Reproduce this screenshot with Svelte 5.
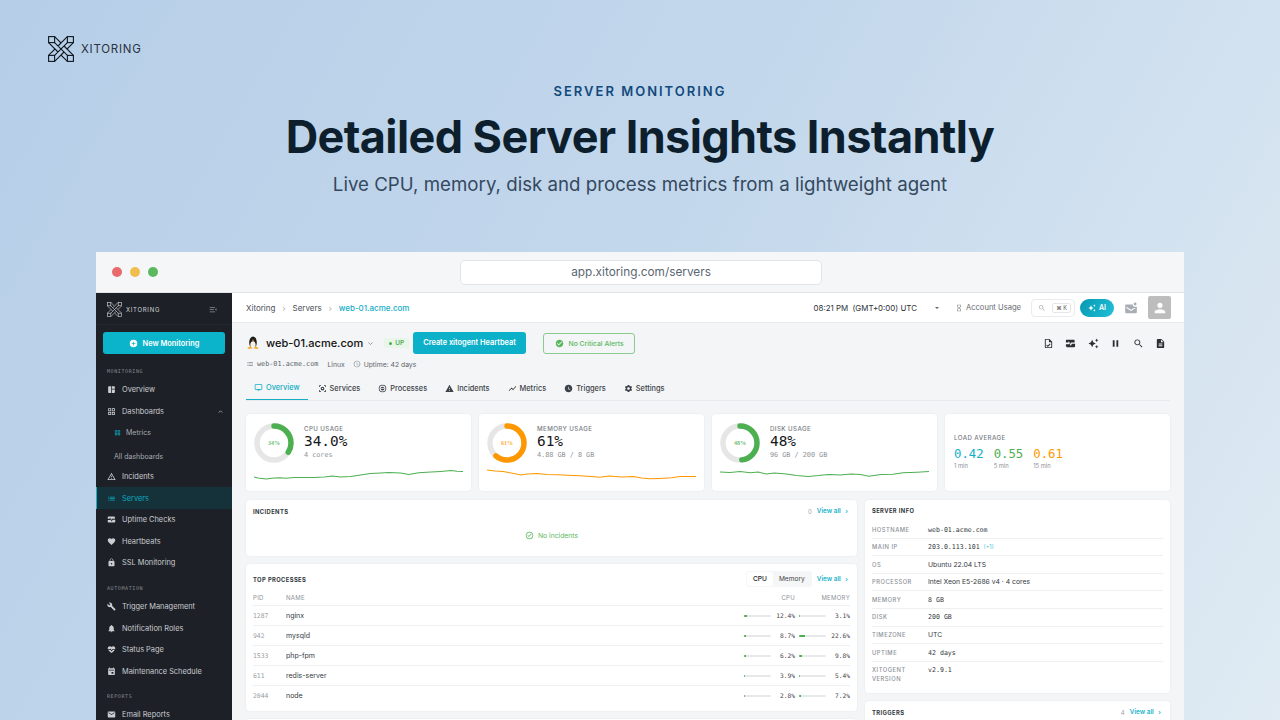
<script>
	const ic = {
		dash: 'M11 21H5c-1.1 0-2-.9-2-2V5c0-1.1.9-2 2-2h6v18zm2 0h6c1.1 0 2-.9 2-2v-7h-8v9zm8-11V5c0-1.1-.9-2-2-2h-6v7h8z',
		grid: 'M3 3h8v8H3V3zm2 2v4h4V5H5zm8-2h8v8h-8V3zm2 2v4h4V5h-4zM3 13h8v8H3v-8zm2 2v4h4v-4H5zm8-2h8v8h-8v-8zm2 2v4h4v-4h-4z',
		warn: 'M12 5.99L19.53 19H4.47L12 5.99M12 2L1 21h22L12 2zm1 14h-2v2h2v-2zm0-6h-2v4h2v-4z',
		warnf: 'M1 21h22L12 2 1 21zm12-3h-2v-2h2v2zm0-4h-2v-4h2v4z',
		list: 'M3 13h2v-2H3v2zm0 4h2v-2H3v2zm0-8h2V7H3v2zm4 4h14v-2H7v2zm0 4h14v-2H7v2zM7 7v2h14V7H7z',
		pulse: 'M20 4H4c-1.1 0-2 .9-2 2v4h5l1.5-3 3 6 1.5-3h8V6c0-1.1-.9-2-2-2zM15 12.5l-2.5 5-3-6-1 1.9H2V18c0 1.1.9 2 2 2h16c1.1 0 2-.9 2-2v-5.5h-7z',
		heart: 'M12 21.35l-1.45-1.32C5.4 15.36 2 12.28 2 8.5 2 5.42 4.42 3 7.5 3c1.74 0 3.41.81 4.5 2.09C13.09 3.81 14.76 3 16.5 3 19.58 3 22 5.42 22 8.5c0 3.78-3.4 6.86-8.55 11.54L12 21.35z',
		lock: 'M18 8h-1V6c0-2.76-2.24-5-5-5S7 3.24 7 6v2H6c-1.1 0-2 .9-2 2v10c0 1.1.9 2 2 2h12c1.1 0 2-.9 2-2V10c0-1.1-.9-2-2-2zm-6 9c-1.1 0-2-.9-2-2s.9-2 2-2 2 .9 2 2-.9 2-2 2zm3.1-9H8.9V6c0-1.71 1.39-3.1 3.1-3.1 1.71 0 3.1 1.39 3.1 3.1v2z',
		build: 'M22.7 19l-9.1-9.1c.9-2.3.4-5-1.5-6.9-2-2-5-2.4-7.4-1.3L9 6 6 9 1.6 4.7C.4 7.1.9 10.1 2.9 12.1c1.9 1.9 4.6 2.4 6.9 1.5l9.1 9.1c.4.4 1 .4 1.4 0l2.3-2.3c.5-.4.5-1.1.1-1.4z',
		bell: 'M12 22c1.1 0 2-.9 2-2h-4c0 1.1.89 2 2 2zm6-6v-5c0-3.07-1.64-5.64-4.5-6.32V4c0-.83-.67-1.5-1.5-1.5s-1.5.67-1.5 1.5v.68C7.63 5.36 6 7.92 6 11v5l-2 2v1h16v-1l-2-2z',
		hpulse: 'M16.5 3c-1.74 0-3.41.81-4.5 2.09C10.91 3.81 9.24 3 7.5 3 4.42 3 2 5.42 2 8.5c0 .85.17 1.64.48 2.5H8l1.2-2 3 5 1.6-3H21.5c.33-.86.5-1.65.5-2.5C22 5.42 19.58 3 16.5 3zM14.9 13l-2.6 4.6-3.1-5.1-.1.5H3.6c1.6 2.3 4.4 4.8 8.4 8.35 3.9-3.55 6.8-6.05 8.4-8.35h-5.5z',
		event: 'M19 3h-1V1h-2v2H8V1H6v2H5c-1.1 0-2 .9-2 2v14c0 1.1.9 2 2 2h14c1.1 0 2-.9 2-2V5c0-1.1-.9-2-2-2zm-2 15h-5v-5h5v5zm2-9H5V7h14v2z',
		mail: 'M20 4H4c-1.1 0-1.99.9-1.99 2L2 18c0 1.1.9 2 2 2h16c1.1 0 2-.9 2-2V6c0-1.1-.9-2-2-2zm0 4l-8 5-8-5V6l8 5 8-5v2z',
		search: 'M15.5 14h-.79l-.28-.27C15.41 12.59 16 11.11 16 9.5 16 5.91 13.09 3 9.5 3S3 5.91 3 9.5 5.91 16 9.5 16c1.61 0 3.09-.59 4.23-1.57l.27.28v.79l5 4.99L20.49 19l-4.99-5zm-6 0C7.01 14 5 11.99 5 9.5S7.01 5 9.5 5 14 7.01 14 9.5 11.99 14 9.5 14z',
		pause: 'M6 19h4V5H6v14zm8-14v14h4V5h-4z',
		doc: 'M14 2H6c-1.1 0-1.99.9-1.99 2L4 20c0 1.1.89 2 1.99 2H18c1.1 0 2-.9 2-2V8l-6-6zm2 16H8v-2h8v2zm0-4H8v-2h8v2zm-3-5V3.5L18.5 9H13z',
		doccheck: 'M14 2H6c-1.1 0-2 .9-2 2v16c0 1.1.9 2 2 2h12c1.1 0 2-.9 2-2V8l-6-6zm4 18H6V4h7v5h5v11zm-9.5-5.5L7 16l3.5 3.5 6-6L15 12l-4.5 4.5-2-2z',
		gear: 'M19.14 12.94c.04-.3.06-.61.06-.94 0-.32-.02-.64-.07-.94l2.03-1.58c.18-.14.23-.41.12-.61l-1.92-3.32c-.12-.22-.37-.29-.59-.22l-2.39.96c-.5-.38-1.03-.7-1.62-.94l-.36-2.54c-.04-.24-.24-.41-.48-.41h-3.84c-.24 0-.43.17-.47.41l-.36 2.54c-.59.24-1.13.57-1.62.94l-2.39-.96c-.22-.08-.47 0-.59.22L2.74 8.87c-.12.21-.08.47.12.61l2.03 1.58c-.05.3-.09.63-.09.94s.02.64.07.94l-2.03 1.58c-.18.14-.23.41-.12.61l1.92 3.32c.12.22.37.29.59.22l2.39-.96c.5.38 1.03.7 1.62.94l.36 2.54c.05.24.24.41.48.41h3.84c.24 0 .44-.17.47-.41l.36-2.54c.59-.24 1.13-.56 1.62-.94l2.39.96c.22.08.47 0 .59-.22l1.92-3.32c.12-.22.07-.47-.12-.61l-2.01-1.58zM12 15.6c-1.98 0-3.6-1.62-3.6-3.6s1.62-3.6 3.6-3.6 3.6 1.62 3.6 3.6-1.62 3.6-3.6 3.6z',
		person: 'M12 12c2.21 0 4-1.79 4-4s-1.79-4-4-4-4 1.79-4 4 1.79 4 4 4zm0 2c-2.67 0-8 1.34-8 4v2h16v-2c0-2.66-5.33-4-8-4z',
		spark: 'M19 9l1.25-2.75L23 5l-2.75-1.25L19 1l-1.25 2.75L15 5l2.75 1.25L19 9zm-7.5.5L9 4 6.5 9.5 1 12l5.5 2.5L9 20l2.5-5.5L17 12l-5.5-2.5zM19 15l-1.25 2.75L15 19l2.75 1.25L19 23l1.25-2.75L23 19l-2.75-1.25L19 15z',
		check: 'M12 2C6.48 2 2 6.48 2 12s4.48 10 10 10 10-4.48 10-10S17.52 2 12 2zm-2 15l-5-5 1.41-1.41L10 14.17l7.59-7.59L19 8l-9 9z',
		checko: 'M12 2C6.48 2 2 6.48 2 12s4.48 10 10 10 10-4.48 10-10S17.52 2 12 2zm0 18c-4.41 0-8-3.59-8-8s3.59-8 8-8 8 3.59 8 8-3.59 8-8 8zm-1.8-4.2L6.6 12.2 8 10.8l2.2 2.2 5.8-5.8 1.4 1.4-7.2 7.2z',
		clock: 'M12 2C6.5 2 2 6.5 2 12s4.5 10 10 10 10-4.5 10-10S17.5 2 12 2zm0 18c-4.41 0-8-3.59-8-8s3.59-8 8-8 8 3.59 8 8-3.59 8-8 8zm.5-13H11v6l5.2 3.2.8-1.3-4.5-2.7V7z',
		clockf: 'M12 2C6.5 2 2 6.5 2 12s4.5 10 10 10 10-4.5 10-10S17.5 2 12 2zm4.2 14.2L11 13V7h1.5v5.2l4.5 2.7-.8 1.3z',
		monitor: 'M20 3H4c-1.1 0-2 .9-2 2v11c0 1.1.9 2 2 2h5v2h6v-2h5c1.1 0 2-.9 2-2V5c0-1.1-.9-2-2-2zm0 13H4V5h16v11z',
		services: 'M3 3h5v2H5v3H3V3zm13 0h5v5h-2V5h-3V3zM3 16h2v3h3v2H3v-5zm16 0h2v5h-5v-2h3v-3zM12 7a5 5 0 100 10 5 5 0 000-10zm0 3a2 2 0 110 4 2 2 0 010-4z',
		proc: 'M12 2a10 10 0 100 20 10 10 0 000-20zm0 18a8 8 0 110-16 8 8 0 010 16zm0-13a5 5 0 100 10 5 5 0 000-10zM8 11h8v2H8v-2z',
		trend: 'M3.5 18.5l6-6 4 4L22 6.9l-1.4-1.4-7.1 8-4-4L2 17z',
		menu: 'M2 5h14v2H2V5zm0 6h11v2H2v-2zm0 6h14v2H2v-2zm17.5-8.5L16 12l3.5 3.5 1.4-1.4-2.1-2.1 2.1-2.1-1.4-1.4z',
		plus: 'M12 2a10 10 0 100 20 10 10 0 000-20zm5 11h-4v4h-2v-4H7v-2h4V7h2v4h4v2z',
		glass: 'M6 2v6l4 4-4 4v6h12v-6l-4-4 4-4V2H6zm10 14.5V20H8v-3.5l4-4 4 4zM12 11.5l-4-4V4h8v3.5l-4 4z',
		mailDot: 'M19 2.5a2.5 2.5 0 110 5 2.5 2.5 0 010-5zM15 6H3.8C2.8 6 2 6.8 2 7.8v11.4C2 20.2 2.8 21 3.8 21h16.4c1 0 1.8-.8 1.8-1.8V10h-3.5c-2.2 0-3.5-2-3.5-4zM20 12l-8 5-8-5V9.8l8 5 5-3 3 .2z'
	};

	const nav = [
		{ k: 'label', t: 'MONITORING' },
		{ i: 'dash', t: 'Overview' },
		{ i: 'grid', t: 'Dashboards', caret: true },
		{ i: 'grid', t: 'Metrics', sub: true },
		{ t: 'All dashboards', plain: true },
		{ i: 'warn', t: 'Incidents' },
		{ i: 'list', t: 'Servers', active: true },
		{ i: 'pulse', t: 'Uptime Checks' },
		{ i: 'heart', t: 'Heartbeats' },
		{ i: 'lock', t: 'SSL Monitoring' },
		{ k: 'label', t: 'AUTOMATION' },
		{ i: 'build', t: 'Trigger Management' },
		{ i: 'bell', t: 'Notification Roles' },
		{ i: 'hpulse', t: 'Status Page' },
		{ i: 'event', t: 'Maintenance Schedule' },
		{ k: 'label', t: 'REPORTS' },
		{ i: 'mail', t: 'Email Reports' }
	];

	const tabs = [
		{ i: 'monitor', t: 'Overview', on: true },
		{ i: 'services', t: 'Services' },
		{ i: 'proc', t: 'Processes' },
		{ i: 'warnf', t: 'Incidents' },
		{ i: 'trend', t: 'Metrics' },
		{ i: 'clockf', t: 'Triggers' },
		{ i: 'gear', t: 'Settings' }
	];

	const stats = [
		{
			label: 'CPU USAGE', value: '34.0%', note: '4 cores', pct: 34, color: '#4caf50',
			pts: '0,13 4,14 8,14.5 12,15 16,14.5 20,14 26,13.8 32,14.2 40,13.6 50,13.4 60,13.6 70,13 78,12 86,13 96,12.6 106,11 116,9.5 126,9 134,8.6 146,9 154,10.5 164,8.8 176,8 186,7.4 196,6.6 202,7.2 208,7.6'
		},
		{
			label: 'MEMORY USAGE', value: '61%', note: '4.88 GB / 8 GB', pct: 61, color: '#ff9800',
			pts: '0,6 8,7 16,7.6 24,9 34,11 40,10 50,9.4 60,10.4 70,10.8 80,11.2 92,11.8 104,12.4 112,13.2 122,12 134,13 146,12.4 154,14 162,14.8 172,14.4 184,13.8 192,12.4 204,12.6 208,12.4'
		},
		{
			label: 'DISK USAGE', value: '48%', note: '96 GB / 200 GB', pct: 48, color: '#4caf50',
			pts: '0,8 10,8.4 20,7.6 30,8.8 38,8 46,10 54,9 66,10 76,11.4 88,12.4 98,11.6 108,10.4 120,11 130,10 140,10.6 148,12.2 160,10.6 172,10.2 182,8.8 196,8.2 208,7.6'
		}
	];

	const procs = [
		{ pid: 1287, name: 'nginx', cpu: 12.4, mem: 3.1 },
		{ pid: 942, name: 'mysqld', cpu: 8.7, mem: 22.6 },
		{ pid: 1533, name: 'php-fpm', cpu: 6.2, mem: 9.8 },
		{ pid: 611, name: 'redis-server', cpu: 3.9, mem: 5.4 },
		{ pid: 2044, name: 'node', cpu: 2.8, mem: 7.2 }
	];

	const info = [
		{ k: 'HOSTNAME', v: 'web-01.acme.com', mono: true },
		{ k: 'MAIN IP', v: '203.0.113.101', mono: true, extra: '(+1)' },
		{ k: 'OS', v: 'Ubuntu 22.04 LTS' },
		{ k: 'PROCESSOR', v: 'Intel Xeon E5-2686 v4 · 4 cores' },
		{ k: 'MEMORY', v: '8 GB', mono: true },
		{ k: 'DISK', v: '200 GB', mono: true },
		{ k: 'TIMEZONE', v: 'UTC' },
		{ k: 'UPTIME', v: '42 days', mono: true },
		{ k: 'XITOGENT VERSION', v: 'v2.9.1', mono: true }
	];

	const circ = 2 * Math.PI * 17;
</script>

{#snippet icon(name, cls)}
	<svg class={cls} viewBox="0 0 24 24" fill="currentColor"><path d={ic[name]} /></svg>
{/snippet}

{#snippet logo(cls)}
	<svg class={cls} viewBox="0 0 26 26" fill="none" stroke="currentColor" stroke-width="1.1">
		<rect x="0.6" y="0.6" width="6" height="6" />
		<rect x="19.4" y="0.6" width="6" height="6" />
		<rect x="0.6" y="19.4" width="6" height="6" />
		<rect x="19.4" y="19.4" width="6" height="6" />
		<path d="M6.6 0.6L13 7l6.4-6.4M6.6 6.6L19.4 19.4M19.4 6.6L6.6 19.4M6.6 25.4L13 19l6.4 6.4M0.6 6.6L7 13l-6.4 6.4M25.4 6.6L19 13l6.4 6.4M10 10l3-3M16 16l-3 3M10 16l-3-3M16 10l3 3" />
	</svg>
{/snippet}

<div class="page">
	<header class="brand">
		<span class="brand-mark">{@render logo('logo-lg')}</span>
		<span class="brand-name">XITORING</span>
	</header>

	<section class="hero">
		<div class="eyebrow">SERVER MONITORING</div>
		<h1>Detailed Server Insights Instantly</h1>
		<p>Live CPU, memory, disk and process metrics from a lightweight agent</p>
	</section>

	<div class="window">
		<div class="chrome">
			<span class="dot red"></span>
			<span class="dot amber"></span>
			<span class="dot green"></span>
			<div class="url">app.xitoring.com/servers</div>
		</div>

		<div class="app">
			<aside class="sidebar">
				<div class="side-top">
					{@render logo('logo-sm')}
					<span class="side-name">XITORING</span>
					{@render icon('menu', 'side-collapse')}
				</div>
				<div class="new-btn">{@render icon('plus', 'i9')}New Monitoring</div>
				<nav>
					{#each nav as n}
						{#if n.k === 'label'}
							<div class="nav-label">{n.t}</div>
						{:else if n.plain}
							<div class="nav-plain">{n.t}</div>
						{:else if n.sub}
							<div class="nav-sub">{@render icon(n.i, 'i7')}{n.t}</div>
						{:else}
							<div class="nav-item" class:active={n.active}>
								{@render icon(n.i, 'i9')}
								<span>{n.t}</span>
								{#if n.caret}<svg class="caret" viewBox="0 0 10 10" fill="none" stroke="currentColor" stroke-width="1.2"><path d="M2.5 6.5L5 4l2.5 2.5" /></svg>{/if}
							</div>
						{/if}
					{/each}
				</nav>
			</aside>

			<main class="main">
				<div class="topbar">
					<div class="crumbs">
						<span>Xitoring</span><i>›</i><span>Servers</span><i>›</i><b>web-01.acme.com</b>
					</div>
					<div class="top-right">
						<span class="time">08:21 PM&nbsp; (GMT+0:00) UTC</span>
						<span class="drop"></span>
						<span class="usage">{@render icon('glass', 'i8 grey')}Account Usage</span>
						<span class="searchbox">{@render icon('search', 'i8 lgrey')}<kbd>⌘ K</kbd></span>
						<span class="ai">{@render icon('spark', 'i8')}AI</span>
						{@render icon('mailDot', 'i14 lgrey')}
						<span class="avatar">{@render icon('person', 'i16')}</span>
					</div>
				</div>

				<div class="content">
					<div class="title-row">
						<svg class="tux" viewBox="0 0 24 24">
							<ellipse cx="12" cy="11" rx="6.5" ry="10" fill="#1b1b1b" />
							<ellipse cx="12" cy="15" rx="4.6" ry="6" fill="#f4f1e6" />
							<path d="M10 6.5h4L12 9z" fill="#f5a623" />
							<path d="M2 21l6-4 2 5H4zM22 21l-6-4-2 5h6z" fill="#f5a623" />
						</svg>
						<span class="server-name">web-01.acme.com</span>
						<svg class="chev" viewBox="0 0 10 10" fill="none" stroke="#777" stroke-width="1"><path d="M2 3.5l3 3 3-3" /></svg>
						<span class="up"><em></em>UP</span>
						<span class="heartbeat">Create xitogent Heartbeat</span>
						<span class="alerts">{@render icon('check', 'i9')}No Critical Alerts</span>
						<div class="actions">
							{@render icon('doccheck', 'i11')}
							{@render icon('pulse', 'i11')}
							{@render icon('spark', 'i11')}
							{@render icon('pause', 'i11')}
							{@render icon('search', 'i11')}
							{@render icon('doc', 'i11')}
						</div>
					</div>

					<div class="meta">
						{@render icon('list', 'i8 grey')}
						<span class="mono">web-01.acme.com</span>
						<span class="linux">Linux</span>
						{@render icon('clock', 'i8 grey')}
						<span>Uptime: 42 days</span>
					</div>

					<div class="tabs">
						{#each tabs as t}
							<div class="tab" class:on={t.on}>{@render icon(t.i, 'i9')}{t.t}</div>
						{/each}
					</div>

					<div class="stats">
						{#each stats as s}
							<div class="card stat">
								<div class="stat-top">
									<div class="ring">
										<svg viewBox="0 0 40 40">
											<circle cx="20" cy="20" r="17" fill="none" stroke="#e6e6e6" stroke-width="5.4" />
											<circle cx="20" cy="20" r="17" fill="none" stroke={s.color} stroke-width="5.4" stroke-linecap="round"
												stroke-dasharray="{(circ * s.pct) / 100} {circ}" transform="rotate(-90 20 20)" />
										</svg>
										<span style="color:{s.color}">{s.pct}%</span>
									</div>
									<div class="stat-text">
										<div class="stat-label">{s.label}</div>
										<div class="stat-value">{s.value}</div>
										<div class="stat-note">{s.note}</div>
									</div>
								</div>
								<svg class="sparkline" viewBox="0 0 208 18" preserveAspectRatio="none">
									<polyline points={s.pts} fill="none" stroke={s.color} stroke-width="1" />
								</svg>
							</div>
						{/each}
						<div class="card load">
							<div class="stat-label">LOAD AVERAGE</div>
							<div class="load-row">
								<div><b class="c-cyan">0.42</b><small>1 min</small></div>
								<div><b class="c-green">0.55</b><small>5 min</small></div>
								<div><b class="c-orange">0.61</b><small>15 min</small></div>
							</div>
						</div>
					</div>

					<div class="columns">
						<div class="col">
							<div class="card incidents">
								<div class="card-head">
									<h4>INCIDENTS</h4>
									<span class="count">0</span>
									<span class="viewall">View all <i>›</i></span>
								</div>
								<div class="none">{@render icon('checko', 'i9')}No incidents</div>
							</div>

							<div class="card processes">
								<div class="card-head proc-head">
									<h4>TOP PROCESSES</h4>
									<span class="toggle"><b>CPU</b><span>Memory</span></span>
									<span class="viewall">View all <i>›</i></span>
								</div>
								<div class="prow phead">
									<span>PID</span><span>NAME</span><span class="r">CPU</span><span class="r">MEMORY</span>
								</div>
								{#each procs as p}
									<div class="prow">
										<span class="pid">{p.pid}</span>
										<span class="pname">{p.name}</span>
										<span class="usebar">
											<span class="track"><span class="fill" style="width:{p.cpu}%"></span></span>
											<span class="num">{p.cpu}%</span>
										</span>
										<span class="usebar">
											<span class="track"><span class="fill" style="width:{p.mem}%"></span></span>
											<span class="num">{p.mem}%</span>
										</span>
									</div>
								{/each}
							</div>

							<div class="card stub"></div>
						</div>

						<div class="col">
							<div class="card info">
								<h4>SERVER INFO</h4>
								{#each info as row}
									<div class="irow">
										<span class="ikey">{row.k}</span>
										<span class="ival" class:mono={row.mono}>{row.v}{#if row.extra}<em>{row.extra}</em>{/if}</span>
									</div>
								{/each}
							</div>
							<div class="card triggers">
								<div class="card-head">
									<h4>TRIGGERS</h4>
									<span class="count">4</span>
									<span class="viewall">View all <i>›</i></span>
								</div>
							</div>
						</div>
					</div>
				</div>
			</main>
		</div>
	</div>
</div>

<style>
	:global(body) {
		margin: 0;
		font-family: Inter, 'Liberation Sans', sans-serif;
	}

	.page {
		width: 1280px;
		height: 720px;
		overflow: hidden;
		background: linear-gradient(120deg, #b6cee8 0%, #c4d8ec 50%, #e0ebf3 100%);
		display: flex;
		flex-direction: column;
	}

	/* hero */
	.brand {
		display: flex;
		align-items: center;
		gap: 7px;
		padding: 36px 0 0 48px;
		height: 26px;
		color: #10171f;
	}
	.brand-mark { display: flex; }
	.logo-lg { width: 26px; height: 26px; }
	.brand-name {
		font-size: 11.5px;
		letter-spacing: 0.75px;
		color: #2a3440;
	}

	.hero {
		text-align: center;
		padding-top: 21px;
		height: 169px;
	}
	.eyebrow {
		font-size: 13px;
		font-weight: 600;
		letter-spacing: 2px;
		color: #124a7c;
		line-height: 16px;
	}
	.hero h1 {
		margin: 9px 0 0;
		font-size: 45px;
		font-weight: 700;
		line-height: 58px;
		color: #0d1f2d;
		letter-spacing: -0.6px;
	}
	.hero p {
		margin: 6px 0 0;
		font-size: 18.7px;
		line-height: 26px;
		color: #35495e;
	}

	/* browser window */
	.window {
		margin: 0 96px;
		flex: 1;
		min-height: 0;
		display: flex;
		flex-direction: column;
		background: #fff;
	}
	.chrome {
		height: 40px;
		flex: none;
		display: flex;
		align-items: center;
		gap: 8px;
		padding-left: 16px;
		background: #f5f6f8;
		border-bottom: 1px solid #dfe3e8;
		position: relative;
	}
	.dot { width: 10px; height: 10px; border-radius: 50%; }
	.red { background: #e96a6a; }
	.amber { background: #f0bd4f; }
	.green { background: #5cb85c; }
	.url {
		position: absolute;
		left: 364px;
		top: 8px;
		width: 360px;
		height: 23px;
		border: 1px solid #e1e5ea;
		border-radius: 5px;
		background: #fff;
		text-align: center;
		font-size: 11.8px;
		line-height: 23px;
		color: #5a6672;
	}

	.app {
		flex: 1;
		min-height: 0;
		display: flex;
	}

	/* sidebar */
	.sidebar {
		width: 136px;
		flex: none;
		background: #1d2026;
		color: #c9ccd1;
		font-size: 7.4px;
		overflow: hidden;
	}
	.side-top {
		height: 30px;
		display: flex;
		align-items: center;
		padding: 0 14px 0 11px;
		gap: 4px;
		color: #cfd2d6;
		border-bottom: 1px solid #262a30;
		padding-top: 1px;
	}
	.logo-sm { width: 15px; height: 15px; }
	.side-name { font-size: 6px; letter-spacing: 0.7px; flex: 1; }
	:global(.side-collapse) { width: 9px; height: 9px; color: #8d9197; }
	.new-btn {
		margin: 7px 7px 0;
		height: 22px;
		display: flex;
		align-items: center;
		justify-content: center;
		gap: 5px;
		background: #0cb4cb;
		border-radius: 3px;
		color: #fff;
		font-weight: 600;
		font-size: 7.4px;
	}
	nav { padding-top: 8px; }
	.nav-label {
		font-family: 'DejaVu Sans Mono', monospace;
		font-size: 5px;
		letter-spacing: 0.6px;
		color: #858a91;
		padding-left: 11px;
		height: 17px;
		line-height: 19px;
	}
	.nav-label:not(:first-child) { margin-top: 5px; }
	.nav-item {
		height: 21.6px;
		display: flex;
		align-items: center;
		gap: 6px;
		padding-left: 11px;
		box-sizing: border-box;
		position: relative;
	}
	.nav-item.active {
		background: #15323b;
		color: #0aa6bc;
		border-left: 1px solid #0cb4cb;
		padding-left: 10px;
	}
	.caret {
		position: absolute;
		right: 8px;
		top: 7px;
		width: 7px;
		height: 7px;
		color: #a5a8ad;
	}
	.nav-sub {
		height: 21.6px;
		display: flex;
		align-items: center;
		gap: 5px;
		padding-left: 18px;
		color: #a6aab0;
		font-size: 7px;
	}
	.nav-sub :global(svg) { color: #0aa6bc; }
	.nav-plain {
		height: 22px;
		line-height: 25px;
		padding-left: 18px;
		font-size: 7px;
		color: #a6aab0;
	}

	/* icon sizes */
	:global(.i7) { width: 7px; height: 7px; flex: none; }
	:global(.i8) { width: 8px; height: 8px; flex: none; }
	:global(.i9) { width: 9px; height: 9px; flex: none; }
	:global(.i11) { width: 11px; height: 11px; flex: none; }
	:global(.i14) { width: 14px; height: 14px; flex: none; }
	:global(.i16) { width: 16px; height: 16px; flex: none; }
	:global(.grey) { color: #8a8f96; }
	:global(.lgrey) { color: #a9aeb4; }

	/* main */
	.main {
		flex: 1;
		min-width: 0;
		background: #f3f5f7;
		display: flex;
		flex-direction: column;
	}
	.topbar {
		height: 29px;
		flex: none;
		background: #fff;
		border-bottom: 1px solid #e8ebee;
		display: flex;
		align-items: center;
		justify-content: space-between;
		padding: 0 13px 0 14px;
		font-size: 8px;
		color: #4b5158;
	}
	.crumbs { display: flex; align-items: center; gap: 7px; }
	.crumbs i { font-style: normal; color: #aaa; }
	.crumbs b { color: #16aec6; font-weight: 500; }
	.top-right { display: flex; align-items: center; }
	.time { font-size: 7.9px; color: #2f343a; }
	.drop {
		width: 0;
		height: 0;
		margin: 0 16px 0 18px;
		border-left: 2.5px solid transparent;
		border-right: 2.5px solid transparent;
		border-top: 2.5px solid #666;
	}
	.usage { display: flex; align-items: center; gap: 3px; margin-right: 10px; color: #666b72; font-size: 7.6px; }
	.searchbox {
		display: flex;
		align-items: center;
		justify-content: space-between;
		width: 44px;
		height: 18px;
		padding: 0 3px 0 6px;
		box-sizing: border-box;
		border: 1px solid #e9ebee;
		border-radius: 4px;
		margin-right: 5px;
	}
	kbd {
		font-family: Inter, sans-serif;
		font-size: 5.5px;
		border: 1px solid #e4e6e9;
		border-radius: 2px;
		padding: 1px 3px;
		color: #555;
	}
	.ai {
		display: flex;
		align-items: center;
		justify-content: center;
		gap: 3px;
		width: 34px;
		height: 18px;
		border-radius: 9px;
		background: linear-gradient(120deg, #0798b4, #21c0d6);
		color: #fff;
		font-size: 7px;
		font-weight: 600;
		margin-right: 10px;
	}
	.avatar {
		width: 23px;
		height: 23px;
		margin-left: 10px;
		border-radius: 2px;
		background: #bdbdbd;
		color: #fff;
		display: flex;
		align-items: center;
		justify-content: center;
	}

	.content { padding: 0 14px; flex: 1; min-height: 0; }

	.title-row {
		display: flex;
		align-items: center;
		height: 24px;
		margin-top: 8px;
	}
	.tux { width: 14px; height: 16px; margin-right: 6px; }
	.server-name { font-size: 11px; font-weight: 500; color: #111; }
	.chev { width: 7px; height: 7px; margin: 0 10px 0 4px; }
	.up {
		display: flex;
		align-items: center;
		gap: 3px;
		padding: 0 5px;
		height: 10px;
		font-size: 6.4px;
		font-weight: 600;
		color: #4caf50;
		background: #eaf5ea;
		border-radius: 2px;
		margin-right: 4px;
	}
	.up em { width: 3px; height: 3px; border-radius: 50%; background: #4caf50; }
	.heartbeat {
		width: 113px;
		height: 22px;
		line-height: 22px;
		text-align: center;
		background: #0cb0c8;
		border-radius: 3px;
		color: #fff;
		font-size: 7.4px;
		font-weight: 600;
		margin-right: 17px;
	}
	.alerts {
		width: 92px;
		height: 21px;
		box-sizing: border-box;
		display: flex;
		align-items: center;
		justify-content: center;
		gap: 5px;
		border: 1px solid #8ccb8f;
		border-radius: 3px;
		color: #5cb860;
		font-size: 6.8px;
		font-weight: 500;
	}
	.actions {
		margin-left: auto;
		display: flex;
		align-items: center;
		gap: 11.5px;
		color: #2b2e33;
		padding-right: 4px;
	}

	.meta {
		display: flex;
		align-items: center;
		gap: 3px;
		margin-top: 3px;
		height: 12px;
		font-size: 6.8px;
		color: #5f656c;
	}
	.mono { font-family: 'DejaVu Sans Mono', monospace; }
	.meta .mono { font-size: 6.8px; }
	.linux { margin: 0 5px 0 6px; }

	.tabs {
		display: flex;
		gap: 18px;
		margin-top: 5px;
		height: 25px;
		border-bottom: 1px solid #e7e9ec;
	}
	.tab {
		display: flex;
		align-items: center;
		gap: 3px;
		font-size: 7.4px;
		font-weight: 500;
		color: #3d4248;
		height: 25px;
		padding-top: 1px;
		box-sizing: border-box;
	}
	.tab.on {
		color: #14aec6;
		border-bottom: 1px solid #14aec6;
		padding: 1px 8px 0;
		margin-right: -8px;
	}

	.card {
		background: #fff;
		border-radius: 4px;
		box-shadow: 0 0 2px rgba(20, 30, 40, 0.08);
	}

	.stats {
		display: grid;
		grid-template-columns: repeat(4, 1fr);
		gap: 8px;
		margin-top: 13px;
	}
	.stat {
		height: 77px;
		padding: 9px 8px 0;
		box-sizing: border-box;
	}
	.stat-top { display: flex; gap: 10px; }
	.ring { width: 40px; height: 40px; position: relative; flex: none; }
	.ring svg { width: 40px; height: 40px; display: block; }
	.ring span {
		position: absolute;
		inset: 0;
		display: flex;
		align-items: center;
		justify-content: center;
		font-family: 'Liberation Serif', serif;
		font-size: 6px;
		font-weight: 700;
		opacity: 0.8;
	}
	.stat-text { padding-top: 2px; }
	.stat-label {
		font-size: 6.2px;
		font-weight: 500;
		letter-spacing: 0.4px;
		color: #777c82;
		line-height: 8px;
	}
	.stat-value {
		font-family: 'DejaVu Sans Mono', monospace;
		font-size: 14.4px;
		color: #14171a;
		line-height: 17px;
	}
	.stat-note {
		font-family: 'DejaVu Sans Mono', monospace;
		font-size: 6.8px;
		color: #8d9298;
		line-height: 9px;
		margin-top: 1px;
	}
	.sparkline {
		display: block;
		width: 209px;
		height: 18px;
		margin-top: 1px;
	}

	.load {
		height: 77px;
		padding: 20px 9px 0;
		box-sizing: border-box;
	}
	.load-row { display: flex; gap: 10px; margin-top: 5px; }
	.load-row b {
		display: block;
		font-family: 'DejaVu Sans Mono', monospace;
		font-weight: 400;
		font-size: 12.3px;
		line-height: 15px;
	}
	.load-row small {
		display: block;
		font-size: 5.8px;
		color: #8d9298;
		line-height: 8px;
	}
	.c-cyan { color: #14aec6; }
	.c-green { color: #4caf50; }
	.c-orange { color: #ff9800; }

	.columns {
		display: grid;
		grid-template-columns: 611px 305px;
		gap: 8px;
		margin-top: 9px;
		align-items: start;
	}
	.col { display: flex; flex-direction: column; gap: 8px; }

	.card-head {
		display: flex;
		align-items: center;
		height: 22px;
		padding: 0 9px 0 7px;
	}
	h4 {
		margin: 0;
		flex: 1;
		font-size: 5.8px;
		font-weight: 700;
		letter-spacing: 0.4px;
		color: #33383e;
	}
	.count { font-size: 6px; color: #a0a4a9; margin-right: 5px; }
	.viewall { font-size: 6.4px; font-weight: 600; color: #1bb3ca; }
	.viewall i { font-style: normal; margin-left: 3px; }

	.incidents { height: 56px; }
	.none {
		display: flex;
		align-items: center;
		justify-content: center;
		gap: 4px;
		margin-top: 3px;
		height: 20px;
		font-size: 6.8px;
		color: #5cb860;
	}

	.processes { height: 147px; }
	.proc-head { height: 30px; }
	.toggle {
		display: flex;
		align-items: center;
		height: 16px;
		padding: 1px;
		box-sizing: border-box;
		background: #f5f6f7;
		border-radius: 3px;
		font-size: 6.6px;
		color: #444;
		margin-right: 5px;
	}
	.toggle b {
		background: #fff;
		font-weight: 500;
		padding: 0 6px;
		line-height: 14px;
		border-radius: 2px;
		color: #222;
	}
	.toggle span { padding: 0 6px; }
	.prow {
		display: grid;
		grid-template-columns: 33px 1fr 51px 55px;
		align-items: center;
		height: 20px;
		margin: 0 7px;
		border-top: 1px solid #eef0f2;
		box-sizing: border-box;
		font-size: 6.8px;
		color: #33383e;
	}
	.phead {
		height: 15px;
		border-top: 0;
		font-size: 6px;
		letter-spacing: 0.3px;
		color: #8d9298;
		margin-top: -4px;
		padding-bottom: 1px;
	}
	.r { text-align: right; }
	.pid { font-family: 'DejaVu Sans Mono', monospace; font-size: 6.4px; color: #9a9ea4; }
	.pname { font-size: 7px; }
	.usebar { display: flex; align-items: center; justify-content: space-between; }
	.usebar + .usebar { padding-left: 4px; }
	.track {
		width: 27px;
		height: 2px;
		background: #e7e8ea;
		border-radius: 1px;
		overflow: hidden;
	}
	.fill { display: block; height: 100%; background: #4caf50; }
	.num {
		font-family: 'DejaVu Sans Mono', monospace;
		font-size: 6.2px;
		color: #444;
	}

	.stub { height: 30px; }

	.info { padding: 7px 7px 5px; height: 193px; box-sizing: border-box; }
	.info h4 { height: 13px; line-height: 8px; margin-bottom: 1px; }
	.irow {
		display: grid;
		grid-template-columns: 56px 1fr;
		min-height: 17.6px;
		box-sizing: border-box;
		padding-top: 4.5px;
		border-bottom: 1px solid #eef0f2;
		font-size: 6.8px;
		line-height: 8.5px;
		color: #33383e;
	}
	.irow:last-child { border-bottom: 0; }
	.ikey {
		font-size: 5.8px;
		font-weight: 500;
		letter-spacing: 0.5px;
		color: #8d9298;
		width: 42px;
	}
	.ival.mono { font-size: 6.6px; }
	.ival em {
		font-family: Inter, sans-serif;
		font-style: normal;
		font-size: 5.6px;
		color: #4fc3d8;
		margin-left: 4px;
	}
	.triggers { height: 30px; }
</style>
